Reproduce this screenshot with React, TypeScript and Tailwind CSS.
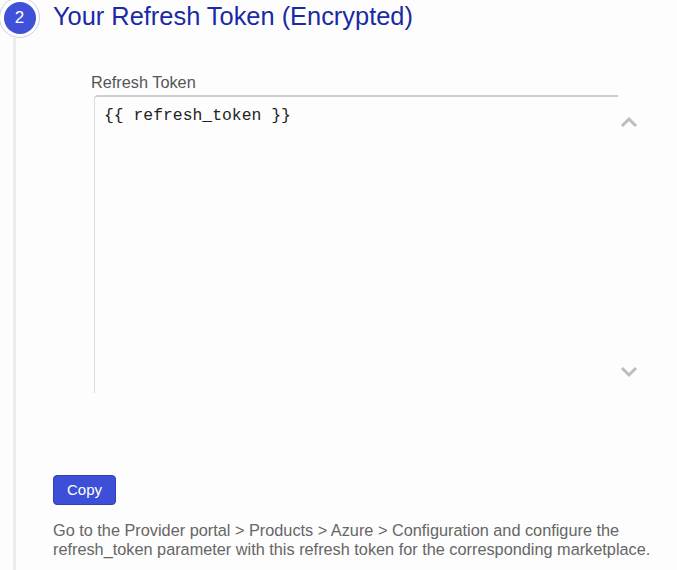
export default function App() {
  return (
    <div className="w-[677px] h-[570px] overflow-hidden bg-[#fdfdfd] font-['Liberation_Sans',Arial,sans-serif] flex">
      {/* timeline rail */}
      <div className="w-[53px] shrink-0 flex flex-col">
        <div className="-mt-[3px] ml-[-1px] w-[41px] h-[41px] rounded-full border border-[#c9cdf3] bg-white flex items-center justify-center">
          <div className="w-[32px] h-[32px] rounded-full bg-[#3f51d8] text-white text-[17px] flex items-center justify-center">
            2
          </div>
        </div>
        <div className="ml-[13px] w-[3px] flex-1 bg-[#ececec]" />
      </div>

      <div className="flex-1 flex flex-col">
        <h2 className="mt-[1px] text-[25.4px] leading-[30px] text-[#1a2aa3]">Your Refresh Token (Encrypted)</h2>

        <div className="ml-[38px] mt-[42px] relative">
          <label className="block text-[16.3px] leading-[19px] text-[#555]">Refresh Token</label>
          <div className="mt-[3px] ml-[3px] w-[524px] h-[298px] border-t-2 border-l border-t-[#cfcfcf] border-l-[#dcdcdc] rounded-tl-[4px] pl-[9px] pt-[9px]">
            <div className="font-['Liberation_Mono','Courier_New',monospace] text-[16.4px] leading-[20px] text-[#222]">
              {'{{ refresh_token }}'}
            </div>
          </div>
          <svg className="absolute left-[529px] top-[43px]" width="18" height="12" viewBox="0 0 18 12">
            <path d="M2 10 L9 3 L16 10" fill="none" stroke="#bdbdbd" strokeWidth="3" />
          </svg>
          <svg className="absolute left-[529px] top-[293px]" width="18" height="12" viewBox="0 0 18 12">
            <path d="M2 2 L9 9 L16 2" fill="none" stroke="#bdbdbd" strokeWidth="3" />
          </svg>
        </div>

        <div className="mt-[82px]">
          <button className="w-[63px] h-[30px] rounded-[4px] bg-[#3d4fd6] border border-[#2f40b8] text-white text-[15px]">
            Copy
          </button>
        </div>

        <p className="mt-[16px] text-[16.3px] leading-[19px] text-[#666] pr-[10px]">
          Go to the Provider portal &gt; Products &gt; Azure &gt; Configuration and configure the refresh_token parameter with this refresh token for the corresponding marketplace.
        </p>
      </div>
    </div>
  )
}
